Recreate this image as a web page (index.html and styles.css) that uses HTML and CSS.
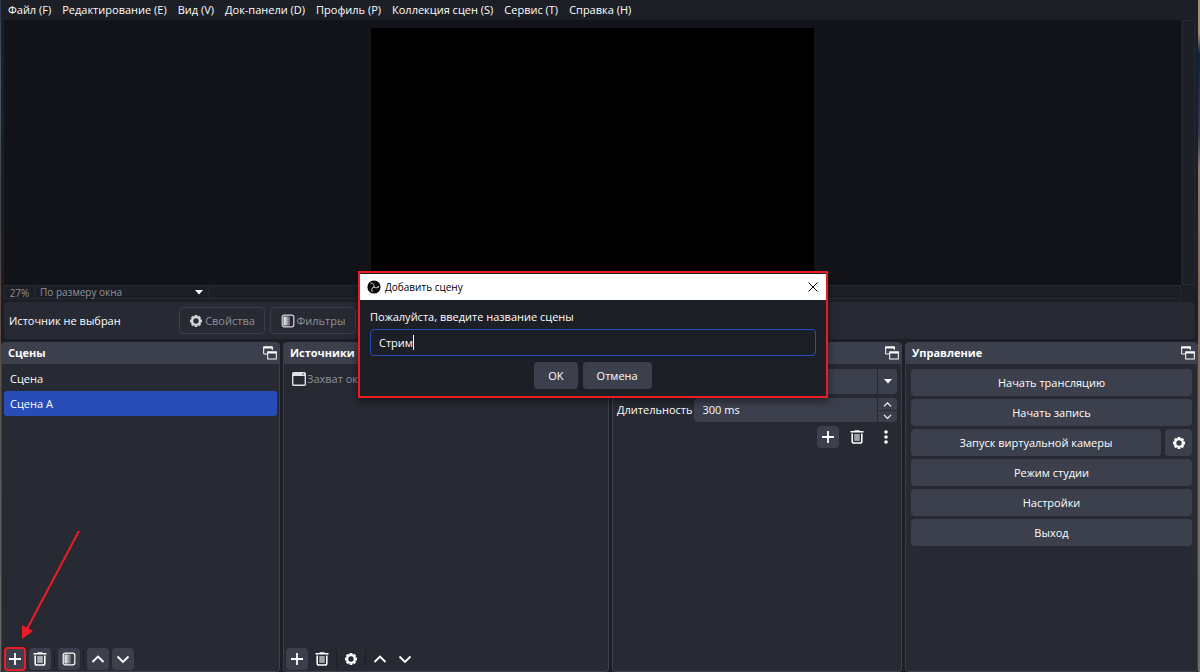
FILE: index.html
```html
<!DOCTYPE html>
<html lang="ru">
<head>
<meta charset="UTF-8" />
<meta name="viewport" content="width=device-width, initial-scale=1" />
<title>OBS Studio</title>
<link rel="stylesheet" href="styles.css">
</head>
<body>
<svg class="sprite" aria-hidden="true">
  <defs>
    <linearGradient id="fade" x1="0" x2="1" y1="0" y2="0">
      <stop offset="0" stop-color="#fefefe" />
      <stop offset="1" stop-color="#5a5e69" />
    </linearGradient>
  </defs>
  <symbol id="i-plus" viewBox="0 0 14 14"><path d="M7 1v12M1 7h12" stroke="currentColor" stroke-width="1.8" fill="none" /></symbol>
  <symbol id="i-trash" viewBox="0 0 14 14">
    <path d="M.5 1.7h13M4.5 1h5" stroke="currentColor" stroke-width="1.6" fill="none" />
    <path d="M2.2 3.5v7.7q0 1.8 1.8 1.8h6q1.8 0 1.8-1.8V3.5" stroke="currentColor" stroke-width="1.6" fill="none" />
    <path d="M4.5 4v6.8h5V4z" fill="currentColor" opacity=".4" />
    <path d="M5 4v7M7 4v7M9 4v7" stroke="currentColor" stroke-width="1" opacity=".6" />
  </symbol>
  <symbol id="i-filter" viewBox="0 0 14 14">
    <rect x="1.2" y="1.2" width="11.6" height="11.6" rx="2" fill="none" stroke="currentColor" stroke-width="1.2" />
    <rect x="2.5" y="2.5" width="6.5" height="9" fill="url(#fade)" />
  </symbol>
  <symbol id="i-up" viewBox="0 0 14 14"><path d="M1.5 10L7 4.5L12.5 10" stroke="currentColor" stroke-width="1.8" fill="none" /></symbol>
  <symbol id="i-down" viewBox="0 0 14 14"><path d="M1.5 4.5L7 10L12.5 4.5" stroke="currentColor" stroke-width="1.8" fill="none" /></symbol>
  <symbol id="i-gear" viewBox="0 0 14 14">
    <circle cx="7" cy="7" r="3.9" fill="none" stroke="currentColor" stroke-width="2.4" />
    <path d="M7 1v1.5M7 11.5V13M1 7h1.5M11.5 7H13M2.8 2.8l1 1M10.2 10.2l1 1M2.8 11.2l1-1M10.2 3.8l1-1" stroke="currentColor" stroke-width="2.8" fill="none" />
  </symbol>
  <symbol id="i-dots" viewBox="0 0 14 14"><circle cx="7" cy="2" r="1.8" fill="currentColor" /><circle cx="7" cy="7" r="1.8" fill="currentColor" /><circle cx="7" cy="12" r="1.8" fill="currentColor" /></symbol>
  <symbol id="i-float" viewBox="0 0 14 14">
    <path d="M4 8H.7V1h8.6v3" fill="none" stroke="currentColor" stroke-width="1" />
    <path d="M.2 1.5h9.6" stroke="currentColor" stroke-width="2" />
    <rect x="4.7" y="6" width="8.6" height="7" fill="none" stroke="currentColor" stroke-width="1" />
    <path d="M4.2 6.5h9.6" stroke="currentColor" stroke-width="2" />
  </symbol>
  <symbol id="i-window" viewBox="0 0 14 14">
    <rect x=".7" y=".7" width="12.6" height="12.6" rx="1" fill="none" stroke="currentColor" stroke-width="1.4" />
    <path d="M1 2.5h12" stroke="currentColor" stroke-width="3" />
    <path d="M10.5 2h1.5" stroke="#272a33" stroke-width="1" />
  </symbol>
  <symbol id="i-caret" viewBox="0 0 8 5"><path d="M0 0h8L4 4.5z" fill="currentColor" /></symbol>
  <symbol id="i-obs" viewBox="0 0 14 14">
    <circle cx="7" cy="7" r="6.6" fill="#0a0a0a" />
    <g fill="none" stroke="#ddd" stroke-width=".9">
      <path d="M7 7.2C7.5 4.8 6 3 3.6 3.2" />
      <path d="M7 7.2C7.5 4.8 6 3 3.6 3.2" transform="rotate(120 7 7)" />
      <path d="M7 7.2C7.5 4.8 6 3 3.6 3.2" transform="rotate(240 7 7)" />
    </g>
  </symbol>
  <symbol id="i-close" viewBox="0 0 10 10"><path d="M.5.5l9 9M9.5.5l-9 9" stroke="currentColor" stroke-width="1" fill="none" /></symbol>
</svg>

<div class="desktop">
<div class="window">
  <nav class="menu">
    <button>Файл (F)</button>
    <button>Редактирование (E)</button>
    <button>Вид (V)</button>
    <button>Док-панели (D)</button>
    <button>Профиль (P)</button>
    <button>Коллекция сцен (S)</button>
    <button>Сервис (T)</button>
    <button>Справка (H)</button>
  </nav>

  <div class="preview">
    <div class="stage"><div class="canvas"></div></div>
    <div class="vscroll"></div>
  </div>
  <div class="zoombar">
    <span class="percent">27%</span>
    <button class="scale">По размеру окна<svg class="caret"><use href="#i-caret" /></svg></button>
  </div>

  <div class="context">
    <span class="source-name">Источник не выбран</span>
    <button disabled><svg class="icon"><use href="#i-gear" /></svg>Свойства</button>
    <button disabled><svg class="icon"><use href="#i-filter" /></svg>Фильтры</button>
  </div>

  <main class="docks">
    <section class="dock">
      <h2>Сцены<svg class="icon"><use href="#i-float" /></svg></h2>
      <ul>
        <li>Сцена</li>
        <li class="selected">Сцена A</li>
      </ul>
      <div class="toolbar filled">
        <button class="marked" aria-label="Добавить"><svg class="icon"><use href="#i-plus" /></svg></button>
        <button aria-label="Удалить"><svg class="icon"><use href="#i-trash" /></svg></button>
        <i></i>
        <button aria-label="Фильтры"><svg class="icon"><use href="#i-filter" /></svg></button>
        <i></i>
        <button aria-label="Вверх"><svg class="icon"><use href="#i-up" /></svg></button>
        <button aria-label="Вниз"><svg class="icon"><use href="#i-down" /></svg></button>
      </div>
    </section>

    <section class="dock">
      <h2>Источники</h2>
      <ul class="sources">
        <li><svg class="icon"><use href="#i-window" /></svg>Захват окна</li>
      </ul>
      <div class="toolbar">
        <button class="on" aria-label="Добавить"><svg class="icon"><use href="#i-plus" /></svg></button>
        <button aria-label="Удалить"><svg class="icon"><use href="#i-trash" /></svg></button>
        <i></i>
        <button aria-label="Свойства"><svg class="icon"><use href="#i-gear" /></svg></button>
        <i></i>
        <button aria-label="Вверх"><svg class="icon"><use href="#i-up" /></svg></button>
        <button aria-label="Вниз"><svg class="icon"><use href="#i-down" /></svg></button>
      </div>
    </section>

    <section class="dock">
      <h2><span></span><svg class="icon"><use href="#i-float" /></svg></h2>
      <div class="transitions">
        <div class="combo">
          <select aria-label="Переход"><option></option></select>
          <span class="drop"><svg class="caret"><use href="#i-caret" /></svg></span>
        </div>
        <div class="duration">
          <label for="duration">Длительность</label>
          <div class="spin">
            <input id="duration" type="text" value="300 ms">
            <div class="steps">
              <button aria-label="Больше"><svg><use href="#i-up" /></svg></button>
              <button aria-label="Меньше"><svg><use href="#i-down" /></svg></button>
            </div>
          </div>
        </div>
        <div class="tools">
          <button class="on" aria-label="Добавить"><svg class="icon"><use href="#i-plus" /></svg></button>
          <button aria-label="Удалить"><svg class="icon"><use href="#i-trash" /></svg></button>
          <button aria-label="Ещё"><svg class="icon"><use href="#i-dots" /></svg></button>
        </div>
      </div>
    </section>

    <section class="dock">
      <h2>Управление<svg class="icon"><use href="#i-float" /></svg></h2>
      <div class="controls">
        <button>Начать трансляцию</button>
        <button>Начать запись</button>
        <div class="camera">
          <button>Запуск виртуальной камеры</button>
          <button class="gear" aria-label="Настройки камеры"><svg class="icon"><use href="#i-gear" /></svg></button>
        </div>
        <button>Режим студии</button>
        <button>Настройки</button>
        <button>Выход</button>
      </div>
    </section>
  </main>
</div>
</div>

<svg class="arrow" viewBox="0 0 62 112" aria-hidden="true">
  <path d="M59 2L7 100" stroke="#ed1c24" stroke-width="2" />
  <path d="M2 110V96L13 102z" fill="#ed1c24" />
</svg>

<form class="dialog">
  <header>
    <svg class="icon"><use href="#i-obs" /></svg>
    <span>Добавить сцену</span>
    <button type="button" class="close" aria-label="Закрыть"><svg><use href="#i-close" /></svg></button>
  </header>
  <div class="dialog-body">
    <label for="scene">Пожалуйста, введите название сцены</label>
    <div class="field">
      <input id="scene" type="text" value="Стрим">
      <span class="cursor"></span>
    </div>
    <div class="actions">
      <button type="button">OK</button>
      <button type="button">Отмена</button>
    </div>
  </div>
</form>
</body>
</html>
```
FILE: styles.css
```css
* { box-sizing: border-box; }
body {
  margin: 0; background: #1d1f26; color: #fefefe;
  font-family: "Open Sans", "Noto Sans", sans-serif; font-size: 11px; line-height: 16px;
}
button, input, select {
  font: inherit; color: inherit; background: none; border: none; padding: 0; margin: 0; outline: none;
}
button { display: flex; align-items: center; justify-content: center; }
ul { list-style: none; margin: 0; padding: 0; }
.sprite { position: absolute; width: 0; height: 0; }
.icon { width: 14px; height: 14px; flex: none; display: block; }
.caret { width: 8px; height: 5px; flex: none; }

/* wallpaper showing at both sides of the window */
.desktop {
  padding: 0 2px 0 1px;
  background:
    linear-gradient(#2c3a48, #4a5a68 12%, #3c434b 30%, #5c4a42 45%, #5a5a5a 70%, #6a6a66) left / 1px 100% no-repeat,
    linear-gradient(#a09070, #a09070 5%, #0d2240 8%, #3a3a50 20%, #8a7a74 25%, #8a6a58 40%, #7a6a64 65%, #6c6c6a) right / 2px 100% no-repeat;
}
.window { height: 100vh; display: flex; flex-direction: column; background: #1d1f26; }
.menu { display: flex; gap: 11px; height: 20px; padding: 0 7px; flex: none; }

/* preview */
.preview { display: flex; gap: 1px; flex: 1; padding: 0 3px; min-height: 0; }
.stage { flex: 1; background: #131419; display: flex; justify-content: center; padding: 8px 0; }
.canvas { background: #000; aspect-ratio: 16 / 9; height: 100%; }
.vscroll { width: 13px; border: 1px solid #272a33; }
.zoombar {
  display: flex; height: 14px; margin: 0 17px 3px 3px; flex: none;
  border: 1px solid #272a33; color: #8e9199; font-size: 10px; line-height: 14px;
}
.percent { width: 30px; text-align: center; border-right: 1px solid #272a33; }
.scale { width: 174px; justify-content: space-between; padding: 0 5px; border-right: 1px solid #272a33; }
.scale .caret { color: #fefefe; }

.context {
  display: flex; align-items: center; gap: 5px; height: 37px; margin: 0 3px 3px; padding: 0 5px;
  background: #272a33; border-radius: 4px; flex: none;
}
.source-name { width: 165px; }
.context button {
  width: 86px; height: 27px; gap: 2px; border: 1px solid #3c404d; border-radius: 4px; color: #8e9199;
}
.context .icon { color: #d5d6da; }

/* docks */
.docks {
  display: grid; grid-template-columns: 279fr 326fr 290fr 293fr; gap: 3px;
  height: 330px; flex: none;
}
.dock {
  display: flex; flex-direction: column; min-width: 0;
  background: #272a33; border: 1px solid #3c404d; border-top: none; border-radius: 4px;
}
.dock h2 {
  display: flex; align-items: center; justify-content: space-between;
  height: 22px; margin: 0; padding: 0 2px 0 6px; flex: none;
  background: #3c404d; border-radius: 4px 4px 0 0; font-size: 11px; font-weight: 700;
}
.dock ul { flex: 1; padding: 2px; }
.dock li { display: flex; align-items: center; height: 25px; padding: 0 6px; border-radius: 3px; }
.dock .selected { background: #284cb8; }
.sources li { gap: 1px; color: #8e9199; }
.sources .icon { color: #e0e1e4; }
.toolbar { display: flex; align-items: center; gap: 3px; height: 24px; padding: 0 2px; flex: none; }
.toolbar button, .tools button { width: 22px; height: 22px; border-radius: 4px; }
.toolbar i { width: 1px; height: 16px; background: #1d1f26; }
.filled button, .toolbar .on, .tools .on { background: #3c404d; }
.toolbar .marked { border: 2px solid #ed1c24; height: 24px; }

.transitions { display: flex; flex-direction: column; gap: 4px; padding: 5px 4px; }
.combo { display: flex; height: 25px; background: #3c404d; border-radius: 4px; }
.combo select { flex: 1; appearance: none; }
.drop { display: flex; align-items: center; justify-content: center; width: 20px; border-left: 1px solid #272a33; }
.duration { display: flex; align-items: center; justify-content: space-between; gap: 2px; }
.spin { display: flex; width: 203px; height: 24px; background: #3c404d; border-radius: 4px; }
.spin input { flex: 1; min-width: 0; padding: 0 8px; }
.steps { width: 20px; border-left: 1px solid #272a33; }
.steps button { width: 100%; height: 12px; }
.steps button + button { border-top: 1px solid #272a33; }
.steps svg { width: 9px; height: 9px; }
.tools { display: flex; justify-content: flex-end; gap: 7px; }

.controls { display: flex; flex-direction: column; gap: 3px; padding: 5px; }
.controls button { width: 100%; height: 27px; background: #3c404d; border-radius: 4px; }
.camera { display: flex; gap: 4px; }
.camera .gear { width: 27px; flex: none; }

.arrow { position: absolute; left: 20px; bottom: 31px; width: 62px; height: 112px; }

/* dialog */
.dialog {
  position: absolute; left: 358px; top: 271px; width: 470px;
  background: #1d1f26; border: 2px solid #ed1c24; box-shadow: 0 3px 8px rgba(0, 0, 0, .5);
}
.dialog header {
  display: flex; align-items: center; gap: 4px; height: 26px; margin-top: 1px; padding: 0 7px;
  background: #fff; color: #000; font-size: 10px;
}
.close { width: 12px; height: 12px; margin-left: auto; }
.close svg { width: 10px; height: 10px; }
.dialog-body { display: flex; flex-direction: column; gap: 4px; padding: 9px 10px 7px; }
.field {
  display: flex; align-items: center; height: 27px; padding: 0 8px;
  border: 1px solid #284cb8; border-radius: 4px;
}
.field input { width: 34px; }
.cursor { width: 1px; height: 15px; background: #fefefe; }
.actions { display: flex; justify-content: center; gap: 5px; padding-top: 2px; }
.actions button { height: 27px; padding: 0 14px; background: #3c404d; border-radius: 4px; }
```
